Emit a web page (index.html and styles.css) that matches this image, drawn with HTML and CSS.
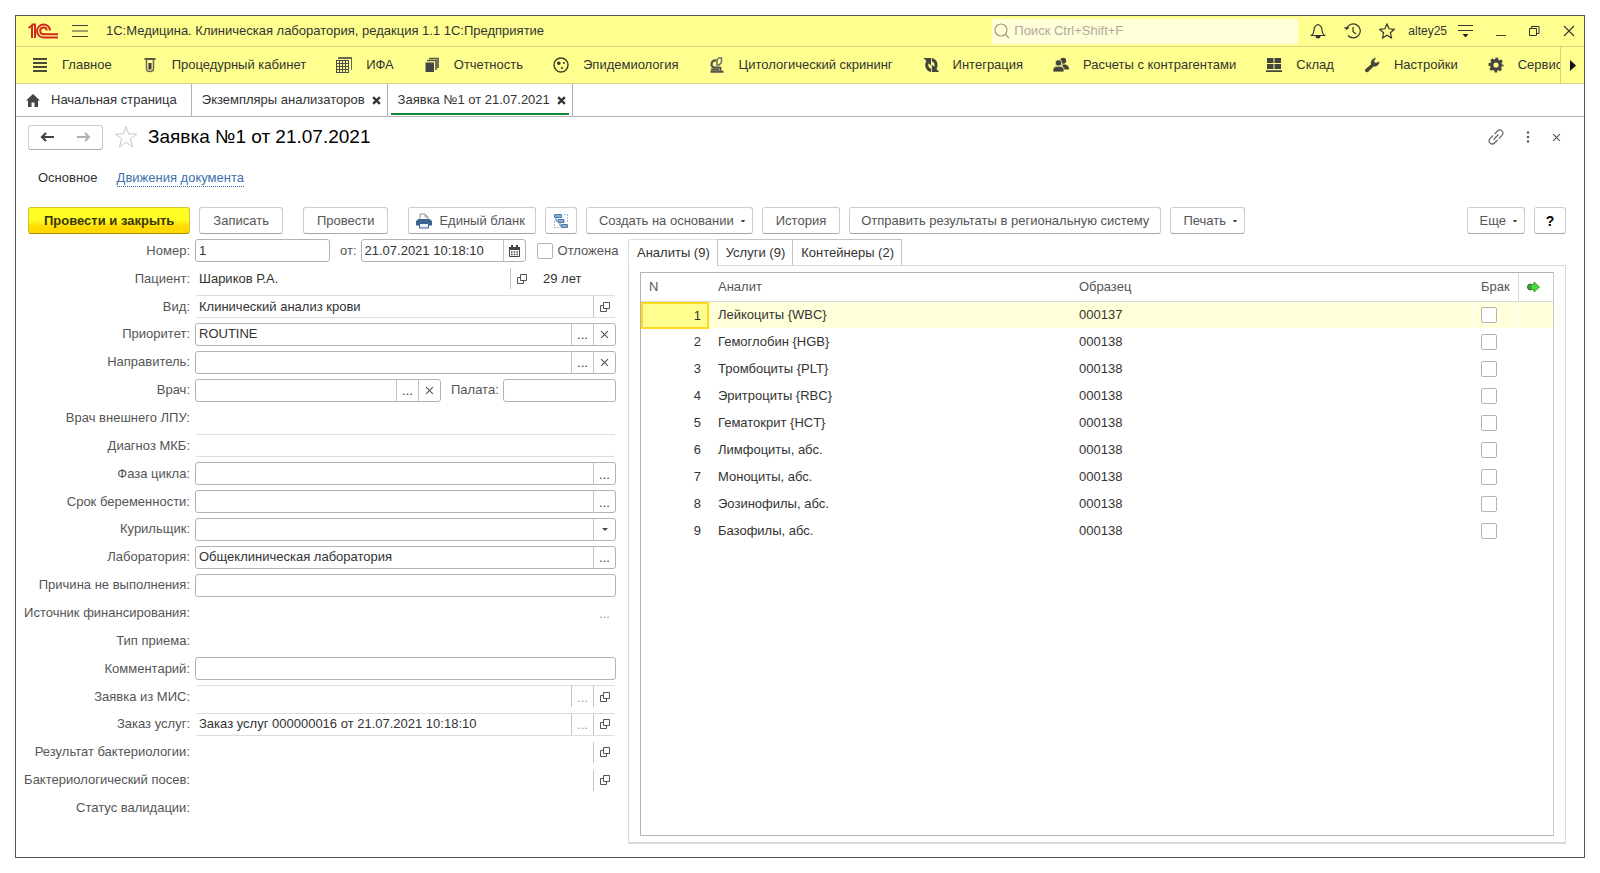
FILE: index.html
```
<!DOCTYPE html>
<html lang="ru">
<head>
<meta charset="utf-8">
<title>Заявка №1 от 21.07.2021</title>
<link rel="stylesheet" href="styles.css">
</head>
<body>
<svg class="defs" aria-hidden="true">
  <symbol id="i-open" viewBox="0 0 12 12"><path d="M4.500 1.500h6v6h-6zM4 4.500H1.500v6h6V8" fill="none" stroke="#555"/></symbol>
  <symbol id="i-x" viewBox="0 0 8 8"><path d="M1 1l6 6M7 1L1 7" fill="none" stroke="currentColor"/></symbol>
</svg>
<div class="window">
  <header class="titlebar">
    <svg class="logo" viewBox="0 0 30 16" fill="none" stroke="#d2281e" stroke-width="2"><path d="M.5 5L4 2.500V15M3.500 1.500H7V15"/><path d="M22 7.500A6.500 6.500 0 1 0 15.500 14.500H30"/><path d="M18.800 7.500A3.300 3.300 0 1 0 15.500 11.200H30"/></svg>
    <button class="icon-btn burger" aria-label="Меню"><svg width="16" height="14" viewBox="0 0 16 14"><path d="M0 1.500h16M0 7h16M0 12.500h16" stroke="#444" stroke-width="1.200"/></svg></button>
    <span class="app-name">1С:Медицина. Клиническая лаборатория, редакция 1.1 1С:Предприятие</span>
    <label class="search"><svg width="16" height="16" viewBox="0 0 16 16" fill="none" stroke="#a39a72" stroke-width="1.200"><circle cx="7" cy="7" r="6"/><path d="M11.500 11.500l3.500 3.500"/></svg><input type="text" placeholder="Поиск Ctrl+Shift+F" aria-label="Поиск"></label>
    <div class="sys">
      <button class="icon-btn" aria-label="Уведомления"><svg width="16" height="16" viewBox="0 0 16 16"><path d="M1.500 12.500c2-1.500 2.500-3 2.500-5.500 0-2.500 1.500-4.500 4-5.500 2.500 1 4 3 4 5.500 0 2.500.5 4 2.500 5.500z" fill="none" stroke="#333" stroke-width="1.200"/><path d="M5.500 13h5a2.500 2.500 0 0 1-5 0z" fill="#333"/></svg></button>
      <button class="icon-btn" aria-label="История"><svg width="17" height="16" viewBox="0 0 17 16" fill="none" stroke="#333" stroke-width="1.200"><path d="M2.500 6A7 7 0 1 1 4 12.500M9 4v4.500l3 2.500"/><path d="M0 4l2.500 3L5.500 4.500z" fill="#333" stroke="none"/></svg></button>
      <button class="icon-btn" aria-label="Избранное"><svg width="16" height="16" viewBox="0 0 16 16"><path d="M8 1l2.100 4.800 5.200.5-3.900 3.500 1.100 5.200L8 12.300 3.500 15l1.100-5.200L.7 6.300l5.200-.5z" fill="none" stroke="#333" stroke-width="1.200"/></svg></button>
      <span class="user">altey25</span>
      <button class="icon-btn" aria-label="Настройка"><svg width="15" height="14" viewBox="0 0 15 14"><path d="M0 1.500h15M0 6.500h15" stroke="#333" stroke-width="1.200"/><path d="M4.500 10h6l-3 3.500z" fill="#222"/></svg></button>
      <button class="icon-btn win" aria-label="Свернуть"><svg width="10" height="12" viewBox="0 0 10 12"><path d="M0 10.500h10" stroke="#444"/></svg></button>
      <button class="icon-btn win" aria-label="Развернуть"><svg width="11" height="11" viewBox="0 0 11 11"><path d="M.5 2.500h7v7h-7zM2.500 2.500V.5h7.500v7H7.500" fill="none" stroke="#333"/></svg></button>
      <button class="icon-btn win" aria-label="Закрыть"><svg width="12" height="12" viewBox="0 0 12 12"><path d="M1 1l10 10M11 1L1 11" stroke="#333" stroke-width="1.100"/></svg></button>
    </div>
  </header>

  <nav class="sections">
    <div class="section-list">
      <a href="#" class="section"><svg viewBox="0 0 16 16"><path d="M1 2h14M1 6h14M1 10h14M1 14h14" stroke="#4a4a3a" stroke-width="2"/></svg>Главное</a>
      <a href="#" class="section"><svg viewBox="0 0 16 16"><path d="M2.500 2h11" fill="none" stroke="#5a5648" stroke-width="2"/><path d="M4.500 2v9.500a3.500 3 0 0 0 7 0V2" fill="none" stroke="#6a6658" stroke-width="1.500"/><path d="M6.500 6h3v6.500h-3z" fill="#3c3c3c"/></svg>Процедурный кабинет</a>
      <a href="#" class="section"><svg viewBox="0 0 16 16" shape-rendering="crispEdges"><path d="M2 1h14v12" fill="none" stroke="#6a675a" stroke-width="2"/><path d="M.5 3.500h12v12H.5zM.5 6.500h12M.5 9.500h12M.5 12.500h12M3.500 3.500v12M6.500 3.500v12M9.500 3.500v12" fill="none" stroke="#4c4c48"/></svg>ИФА</a>
      <a href="#" class="section"><svg viewBox="0 0 16 16"><path d="M1.500 5.500h8.500V15H1.500z" fill="#454545"/><path d="M3 3.500h9V13M5 1.500h9v9.500" fill="none" stroke="#5c594c" stroke-width="1.700"/></svg>Отчетность</a>
      <a href="#" class="section"><svg viewBox="0 0 16 16"><circle cx="8" cy="8" r="7" fill="none" stroke="#3f3d2c" stroke-width="1.400"/><circle cx="5.800" cy="6.300" r="1.700" fill="#333"/><circle cx="10.800" cy="6" r="1" fill="#333"/><circle cx="9" cy="11" r="1.100" fill="#333"/></svg>Эпидемиология</a>
      <a href="#" class="section"><svg viewBox="0 0 16 16" fill="none" stroke="#55554a"><path d="M7.500 3.500C4 3 2.500 5 2.500 7.500c0 1.500 1.500 3 3.500 3h5.500" stroke-width="2.200"/><path d="M8 2.500l2-1.500h2.500v4.500L10 8H8z" stroke="#6c6c68" stroke-width="1.500"/><path d="M2 12.500h8M1.500 14.800h13M11.500 10v4" stroke-width="1.900"/></svg>Цитологический скрининг</a>
      <a href="#" class="section"><svg viewBox="0 0 16 16" fill="#454540"><path id="arr" d="M.5 1H8v7.500L5.700 6.300c-1 2.200-.2 4.400 2.300 5.400V15C2.800 14 .8 8.500 3.300 3.900z"/><use href="#arr" transform="rotate(180 8 8) translate(-.8 0)"/></svg>Интеграция</a>
      <a href="#" class="section"><svg viewBox="0 0 16 16" fill="#454540"><circle cx="10.200" cy="3.800" r="3"/><path d="M9 7.500h3.500c2.500.7 3.500 2 3.500 5h-5z"/><g stroke="#ffff8f" stroke-width=".8"><circle cx="5.500" cy="6" r="3.300"/><path d="M0 15v-2.500C0 10.500 2 9.500 4 9.200h3c2 .3 4 1.300 4 3.300V15z"/></g></svg>Расчеты с контрагентами</a>
      <a href="#" class="section"><svg viewBox="0 0 16 16"><path d="M1 1h6.500v5H1zM8.500 1H15v5H8.500zM1 7h6.500v5H1zM8.500 7H15v5H8.500zM0 13.200h16V15H0z" fill="#454540"/></svg>Склад</a>
      <a href="#" class="section"><svg viewBox="0 0 16 16"><path d="M1.300 12.300L7 7.500C6.300 4 8.500 1 12 1L10 4l1.500 2 3.800-1.500C15.500 8 12.500 10 9.500 9.500L4 15c-1.500 1.200-4-1-2.700-2.700z" fill="#454540"/></svg>Настройки</a>
      <a href="#" class="section"><svg viewBox="0 0 16 16" fill="none" stroke="#454540"><circle cx="8" cy="8" r="4.300" stroke-width="3.400"/><circle cx="8" cy="8" r="6.200" stroke-width="2.600" stroke-dasharray="2.700 2.170" stroke-dashoffset="1.350"/></svg>Сервис</a>
    </div>
    <button class="scroll-right" aria-label="Далее"><svg width="6" height="11" viewBox="0 0 6 11"><path d="M0 0l6 5.500L0 11z" fill="#111"/></svg></button>
  </nav>

  <nav class="tabs">
    <a href="#" class="tab home"><svg width="14" height="13" viewBox="0 0 14 13"><path d="M7 0l7 6.500h-2V13H8.500V8.500h-3V13H2V6.500H0z" fill="#454545"/></svg>Начальная страница</a>
    <a href="#" class="tab">Экземпляры анализаторов<svg class="tab-x"><use href="#i-x"/></svg></a>
    <a href="#" class="tab current">Заявка №1 от 21.07.2021<svg class="tab-x"><use href="#i-x"/></svg></a>
  </nav>

  <main class="page">
    <div class="head">
      <div class="navbtns">
        <button aria-label="Назад"><svg width="14" height="10" viewBox="0 0 14 10"><path d="M14 5H3M6 1L2 5l4 4" fill="none" stroke="#444" stroke-width="2.200"/></svg></button>
        <button aria-label="Вперед"><svg width="14" height="10" viewBox="0 0 14 10"><path d="M0 5h11M8 1l4 4-4 4" fill="none" stroke="#b0b0b0" stroke-width="2"/></svg></button>
      </div>
      <svg class="star" viewBox="0 0 24 24"><path d="M12 1.500l2.700 7.500h8l-6.400 4.900 2.300 8L12 17.300l-6.600 4.600 2.300-8L1.300 9h8z" fill="none" stroke="#c4c8d0"/></svg>
      <h1>Заявка №1 от 21.07.2021</h1>
      <div class="head-tools">
        <button class="icon-btn" aria-label="Ссылка"><svg width="16" height="16" viewBox="0 0 16 16" fill="none" stroke="#666" stroke-width="1.200"><path d="M6.500 5l3-3a3 3 0 0 1 4.500 4.300L11 9.500M9.500 11l-3 3A3 3 0 0 1 2 9.700L5 6.500M5.500 10.500l5-5"/></svg></button>
        <button class="icon-btn" aria-label="Еще"><svg width="4" height="12" viewBox="0 0 4 12" fill="#555"><circle cx="2" cy="1.500" r="1.200"/><circle cx="2" cy="6" r="1.200"/><circle cx="2" cy="10.500" r="1.200"/></svg></button>
        <button class="icon-btn" aria-label="Закрыть"><svg class="x"><use href="#i-x"/></svg></button>
      </div>
    </div>

    <div class="subnav"><span>Основное</span><a href="#">Движения документа</a></div>

    <div class="commands">
      <button class="btn primary">Провести и закрыть</button>
      <button class="btn gap-after">Записать</button>
      <button class="btn gap-after">Провести</button>
      <button class="btn print"><svg width="16" height="16" viewBox="0 0 16 16"><path d="M4 7V1h5l3 3v3" fill="#fff" stroke="#8a94a4"/><path d="M9 1v3h3" fill="none" stroke="#8a94a4"/><path d="M2.500 6h11L16 8v4.500H0V8z" fill="#3d6290"/><path d="M3.500 10.500h9V15h-9z" fill="#e8eef5" stroke="#3d6290"/></svg>Единый бланк</button>
      <button class="btn square" aria-label="Структура подчиненности"><svg width="16" height="16" viewBox="0 0 16 16"><path d="M1.500 1.500h7v3h-7zM5 6.500h6v3H5zM8.500 11.500h6v3h-6z" fill="#86aed2" stroke="#4f7fac"/><path d="M3 5v3h2M7 10v3h1.500" fill="none" stroke="#4f7fac"/><path d="M11 1.500h3.500V9M1.500 8v6.500H6" fill="none" stroke="#9dbcda" stroke-dasharray="2 1"/></svg></button>
      <button class="btn drop">Создать на основании<i class="caret"></i></button>
      <button class="btn">История</button>
      <button class="btn long">Отправить результаты в региональную систему</button>
      <button class="btn drop">Печать<i class="caret"></i></button>
      <button class="btn drop more">Еще<i class="caret"></i></button>
      <button class="btn help">?</button>
    </div>

    <div class="content">
      <form class="form">
        <label for="f1">Номер:</label>
        <div class="row"><div class="field w-num"><input id="f1" value="1"></div><label class="in-label" for="f1d">от:</label><div class="field w-date"><input id="f1d" value="21.07.2021 10:18:10"><button type="button" aria-label="Календарь"><svg width="11" height="12" viewBox="0 0 11 12"><path d="M.5 2.500h10v9H.5z" fill="none" stroke="#444"/><path d="M0 2h11v3H0zM2 0h2v2H2zM7 0h2v2H7z" fill="#444"/><path d="M2 7h7M2 9.500h7" stroke="#444" stroke-width="1.400" stroke-dasharray="1.500 1.200"/></svg></button></div><label class="check"><input type="checkbox">Отложена</label></div>
        <label for="f2">Пациент:</label>
        <div class="row"><div class="field bare w-pat"><input id="f2" value="Шариков Р.А." readonly><button type="button" aria-label="Открыть"><svg class="open"><use href="#i-open"/></svg></button></div><span class="age">29 лет</span></div>
        <label for="f3">Вид:</label>
        <div class="row"><div class="field soft"><input id="f3" value="Клинический анализ крови" readonly><button type="button" aria-label="Открыть"><svg class="open"><use href="#i-open"/></svg></button></div></div>
        <label for="f4">Приоритет:</label>
        <div class="row"><div class="field"><input id="f4" value="ROUTINE"><button type="button" class="dots">...</button><button type="button" aria-label="Очистить"><svg class="x"><use href="#i-x"/></svg></button></div></div>
        <label for="f5">Направитель:</label>
        <div class="row"><div class="field"><input id="f5"><button type="button" class="dots">...</button><button type="button" aria-label="Очистить"><svg class="x"><use href="#i-x"/></svg></button></div></div>
        <label for="f6">Врач:</label>
        <div class="row"><div class="field w-doc"><input id="f6"><button type="button" class="dots">...</button><button type="button" aria-label="Очистить"><svg class="x"><use href="#i-x"/></svg></button></div><label class="in-label" for="f6p">Палата:</label><div class="field"><input id="f6p"></div></div>
        <label for="f7">Врач внешнего ЛПУ:</label>
        <div class="row"><div class="field bare"><input id="f7" readonly></div></div>
        <label for="f8">Диагноз МКБ:</label>
        <div class="row"><div class="field soft"><input id="f8" readonly></div></div>
        <label for="f9">Фаза цикла:</label>
        <div class="row"><div class="field"><input id="f9"><button type="button" class="dots">...</button></div></div>
        <label for="f10">Срок беременности:</label>
        <div class="row"><div class="field"><input id="f10"><button type="button" class="dots">...</button></div></div>
        <label for="f11">Курильщик:</label>
        <div class="row"><div class="field"><input id="f11"><button type="button" aria-label="Выбрать"><i class="caret down"></i></button></div></div>
        <label for="f12">Лаборатория:</label>
        <div class="row"><div class="field"><input id="f12" value="Общеклиническая лаборатория"><button type="button" class="dots">...</button></div></div>
        <label for="f13">Причина не выполнения:</label>
        <div class="row"><div class="field"><input id="f13"></div></div>
        <label for="f14">Источник финансирования:</label>
        <div class="row"><div class="field bare"><input id="f14" readonly><button type="button" class="dots plain" disabled>...</button></div></div>
        <label for="f15">Тип приема:</label>
        <div class="row"><div class="field bare"><input id="f15" readonly></div></div>
        <label for="f16">Комментарий:</label>
        <div class="row"><div class="field"><input id="f16"></div></div>
        <label for="f17">Заявка из МИС:</label>
        <div class="row"><div class="field soft top"><input id="f17" readonly><button type="button" class="dots" disabled>...</button><button type="button" aria-label="Открыть"><svg class="open"><use href="#i-open"/></svg></button></div></div>
        <label for="f18">Заказ услуг:</label>
        <div class="row"><div class="field soft"><input id="f18" value="Заказ услуг 000000016 от 21.07.2021 10:18:10" readonly><button type="button" class="dots" disabled>...</button><button type="button" aria-label="Открыть"><svg class="open"><use href="#i-open"/></svg></button></div></div>
        <label for="f19">Результат бактериологии:</label>
        <div class="row"><div class="field bare"><input id="f19" readonly><button type="button" aria-label="Открыть"><svg class="open"><use href="#i-open"/></svg></button></div></div>
        <label for="f20">Бактериологический посев:</label>
        <div class="row"><div class="field bare"><input id="f20" readonly><button type="button" aria-label="Открыть"><svg class="open"><use href="#i-open"/></svg></button></div></div>
        <label for="f21">Статус валидации:</label>
        <div class="row"><div class="field bare"><input id="f21" readonly></div></div>
      </form>

      <section class="side">
        <div class="side-tabs">
          <button class="on">Аналиты (9)</button><button>Услуги (9)</button><button>Контейнеры (2)</button>
        </div>
        <div class="panel">
          <div class="grid">
            <table>
              <colgroup><col class="c-n"><col class="c-a"><col class="c-s"><col class="c-b"><col class="c-i"></colgroup>
              <thead><tr><th>N</th><th>Аналит</th><th>Образец</th><th>Брак</th><th class="ico"><svg width="13" height="12" viewBox="0 0 13 12"><circle cx="3.500" cy="6" r="3" fill="#3aa53a" stroke="#3c6b22"/><path d="M4 3.500h3V1l5.500 5L7 11V8.500H4z" fill="#3fe03f" stroke="#4f9030"/></svg></th></tr></thead>
              <tbody>
                <tr class="sel"><td>1</td><td>Лейкоциты {WBC}</td><td>000137</td><td><input type="checkbox" aria-label="Брак 1"></td><td></td></tr>
                <tr><td>2</td><td>Гемоглобин {HGB}</td><td>000138</td><td><input type="checkbox" aria-label="Брак 2"></td><td></td></tr>
                <tr><td>3</td><td>Тромбоциты {PLT}</td><td>000138</td><td><input type="checkbox" aria-label="Брак 3"></td><td></td></tr>
                <tr><td>4</td><td>Эритроциты {RBC}</td><td>000138</td><td><input type="checkbox" aria-label="Брак 4"></td><td></td></tr>
                <tr><td>5</td><td>Гематокрит {HCT}</td><td>000138</td><td><input type="checkbox" aria-label="Брак 5"></td><td></td></tr>
                <tr><td>6</td><td>Лимфоциты, абс.</td><td>000138</td><td><input type="checkbox" aria-label="Брак 6"></td><td></td></tr>
                <tr><td>7</td><td>Моноциты, абс.</td><td>000138</td><td><input type="checkbox" aria-label="Брак 7"></td><td></td></tr>
                <tr><td>8</td><td>Эозинофилы, абс.</td><td>000138</td><td><input type="checkbox" aria-label="Брак 8"></td><td></td></tr>
                <tr><td>9</td><td>Базофилы, абс.</td><td>000138</td><td><input type="checkbox" aria-label="Брак 9"></td><td></td></tr>
              </tbody>
            </table>
          </div>
        </div>
      </section>
    </div>
  </main>
</div>
</body>
</html>
```

FILE: styles.css
```
* { box-sizing: border-box; }
body {
  margin: 0;
  padding: 15px;
  background: #fff;
  color: #333;
  font: 13px/16px "Liberation Sans", Arial, sans-serif;
}
button, input { font: inherit; color: inherit; }
button { margin: 0; padding: 0; border: 0; background: none; }
a { color: inherit; text-decoration: none; }
svg { flex: none; display: block; }
.defs { display: none; }

.window {
  display: flex;
  flex-direction: column;
  min-height: calc(100vh - 30px);
  border: 1px solid #555;
}

/* title bar */
.titlebar {
  display: flex;
  align-items: center;
  height: 31px;
  padding: 0 9px 0 12px;
  background: #ffff8f;
  border-bottom: 1px solid #dcd183;
}
.logo { width: 30px; height: 16px; }
.burger { margin-left: 14px; }
.app-name { margin-left: 18px; }
.icon-btn { display: flex; align-items: center; justify-content: center; }
.search {
  display: flex;
  align-items: center;
  gap: 4px;
  width: 306px;
  height: 25px;
  margin-left: auto;
  padding-left: 2px;
  background: #ffffd9;
}
.search input { flex: 1; min-width: 0; border: 0; padding: 0; background: none; outline: none; }
.search input::placeholder { color: #b3a99a; opacity: 1; }
.sys { display: flex; align-items: center; gap: 18px; margin-left: 12px; }
.user { font-size: 12px; margin: 0 -7px 0 -5px; }
.win { margin-left: 5px; }

/* sections */
.sections {
  display: flex;
  height: 37px;
  background: #ffff8f;
  border-bottom: 1px solid #d8d48c;
}
.section-list {
  display: flex;
  flex: 1;
  gap: 26px;
  min-width: 0;
  padding-left: 12px;
  overflow: hidden;
  white-space: nowrap;
}
.section { display: flex; flex: none; align-items: center; gap: 10px; }
.section svg { width: 16px; height: 16px; margin: 0 4px; }
.scroll-right {
  display: flex;
  align-items: center;
  width: 24px;
  padding-left: 9px;
  border-left: 1px solid #dcd183;
}

/* open tabs */
.tabs { display: flex; height: 33px; border-bottom: 1px solid #b3b3b3; }
.tab {
  display: flex;
  align-items: center;
  gap: 7px;
  padding: 0 6px 0 10px;
  border-right: 1px solid #b3b3b3;
}
.tab.home { gap: 11px; padding-right: 14px; }
.tab-x { width: 9px; height: 9px; stroke-width: 2; }
.tab.current { position: relative; }
.tab.current::after {
  content: "";
  position: absolute;
  left: 3px;
  right: 3px;
  bottom: 1px;
  height: 2px;
  background: #11893d;
}

/* page */
.page { display: flex; flex: 1; flex-direction: column; padding: 7px 18px 13px 12px; }
.head { display: flex; align-items: center; height: 26px; }
.navbtns {
  display: flex;
  width: 75px;
  height: 25px;
  border: 1px solid #ccc;
  border-bottom-color: #aaa;
  border-radius: 3px;
}
.navbtns button { display: flex; flex: 1; align-items: center; justify-content: center; }
.star { width: 24px; height: 24px; margin: 0 10px 0 11px; }
h1 { margin: 0; font-size: 19px; line-height: 24px; font-weight: normal; color: #000; }
.head-tools { display: flex; align-items: center; gap: 22px; margin-left: auto; padding-right: 5px; }
.x { width: 9px; height: 9px; color: #555; }
.subnav { display: flex; gap: 19px; margin: 20px 0 0 10px; }
.subnav a { color: #3d6fb0; border-bottom: 1px dotted #3d6fb0; }

/* commands */
.commands { display: flex; gap: 9px; margin-top: 20px; color: #555; }
.btn {
  display: flex;
  align-items: center;
  justify-content: center;
  height: 27px;
  padding: 0 13px;
  border: 1px solid #ccc;
  border-bottom-color: #a8a8a8;
  border-radius: 3px;
  background: #fff;
  white-space: nowrap;
}
.primary {
  padding: 0 15px;
  background: linear-gradient(#ffff26 45%, #ffd900 75%);
  border-color: #d8c030;
  border-bottom-color: #a08a10;
  color: #3c3408;
  font-weight: bold;
}
.gap-after { margin-right: 11px; }
.print { gap: 7px; padding: 0 10px 0 7px; }
.square { width: 32px; padding: 0; }
.long { padding: 0 11px; }
.caret {
  flex: none;
  width: 4px;
  height: 0;
  border-top: 2px solid #444;
  border-left: 1px solid transparent;
  border-right: 1px solid transparent;
}
.drop { gap: 7px; padding: 0 7px 0 12px; }
.more { margin-left: auto; }
.help { width: 32px; padding: 0; color: #000; font-size: 14px; font-weight: bold; }

/* form */
.content {
  display: grid;
  flex: 1;
  grid-template-columns: minmax(0, 588fr) minmax(0, 938fr);
  gap: 12px;
  margin-top: 3px;
}
.form {
  display: grid;
  grid-template-columns: 162px minmax(0, 1fr);
  grid-auto-rows: 1fr;
  column-gap: 5px;
  align-items: center;
  margin-bottom: 22px;
}
.form > label { justify-self: end; white-space: nowrap; color: #555; }
.row { display: flex; align-items: center; color: #333; }
.in-label { flex: none; margin: 0 4px 0 10px; color: #555; }
.field {
  display: flex;
  flex: 1;
  min-width: 0;
  height: 23px;
  border: 1px solid #b3b3b3;
  border-radius: 3px;
}
.field input { flex: 1; width: 0; min-width: 0; padding: 0 3px; border: 0; background: none; outline: none; }
.field button {
  display: flex;
  flex: none;
  align-items: center;
  justify-content: center;
  width: 22px;
  border-left: 1px solid #c4c4c4;
}
.field .dots { padding-top: 2px; }
.field button:disabled { color: #999; }
.field.soft { border-color: #ddd transparent; }
.field.top { border-bottom-color: transparent; }
.field.bare { border-color: transparent; }
.field button.plain { border-left-color: transparent; }
.open { width: 12px; height: 12px; }
.caret.down { width: 6px; border-width: 3px 3px 0; }
.w-num { flex: 0 0 135px; }
.w-date { flex: 0 0 165px; }
.w-pat { flex: 0 0 338px; }
.w-doc { flex: 0 0 246px; }
.age { margin-left: 10px; }
.check { display: flex; align-items: center; gap: 5px; margin-left: 11px; color: #555; }
input[type="checkbox"] {
  appearance: none;
  display: block;
  width: 16px;
  height: 16px;
  margin: 0;
  border: 1px solid #b3b3b3;
  border-radius: 2px;
  background: #fff;
}

/* analytes */
.side { display: flex; flex-direction: column; margin-top: 2px; }
.side-tabs { display: flex; height: 26px; }
.side-tabs button {
  padding: 0 7px 0 8px;
  border: 1px solid #c4c4c4;
  border-left: 0;
  border-bottom: 0;
  white-space: nowrap;
}
.side-tabs .on {
  z-index: 1;
  margin-bottom: -1px;
  border-color: #ddd #c4c4c4 #ddd #ddd;
  border-left: 1px solid #ddd;
  border-radius: 3px 0 0;
  background: #fff;
}
.panel {
  display: flex;
  flex: 1;
  padding: 6px 11px;
  border: 1px solid #d9d9d9;
  border-bottom-width: 2px;
}
.grid { flex: 1; min-width: 0; border: 1px solid #b3b3b3; border-right-color: #ccc; }
table { width: 100%; table-layout: fixed; border-collapse: separate; border-spacing: 0; }
.c-n { width: 68px; }
.c-a { width: 361px; }
.c-b { width: 45px; }
.c-i { width: 35px; }
th { height: 29px; padding: 0 8px; border-bottom: 1px solid #d9d9d9; text-align: left; font-weight: normal; color: #555; }
th:nth-child(2), th:nth-child(3), td:nth-child(2), td:nth-child(3) { padding-left: 9px; }
th:nth-child(4) { padding: 0 8px; }
th.ico { border-left: 1px solid #d9d9d9; }
td { height: 27px; padding: 0 8px; border-bottom: 1px solid #fff; }
td:first-child { text-align: right; }
td:nth-child(4) { border-left: 1px solid #fff; padding: 0 7px; }
td:nth-child(5) { border-left: 1px solid #fff; }
.sel td { background: #ffffd9; }
.sel td:first-child { padding-right: 6px; background: #ffff8f; border: 2px solid #ffd91f; }
```
